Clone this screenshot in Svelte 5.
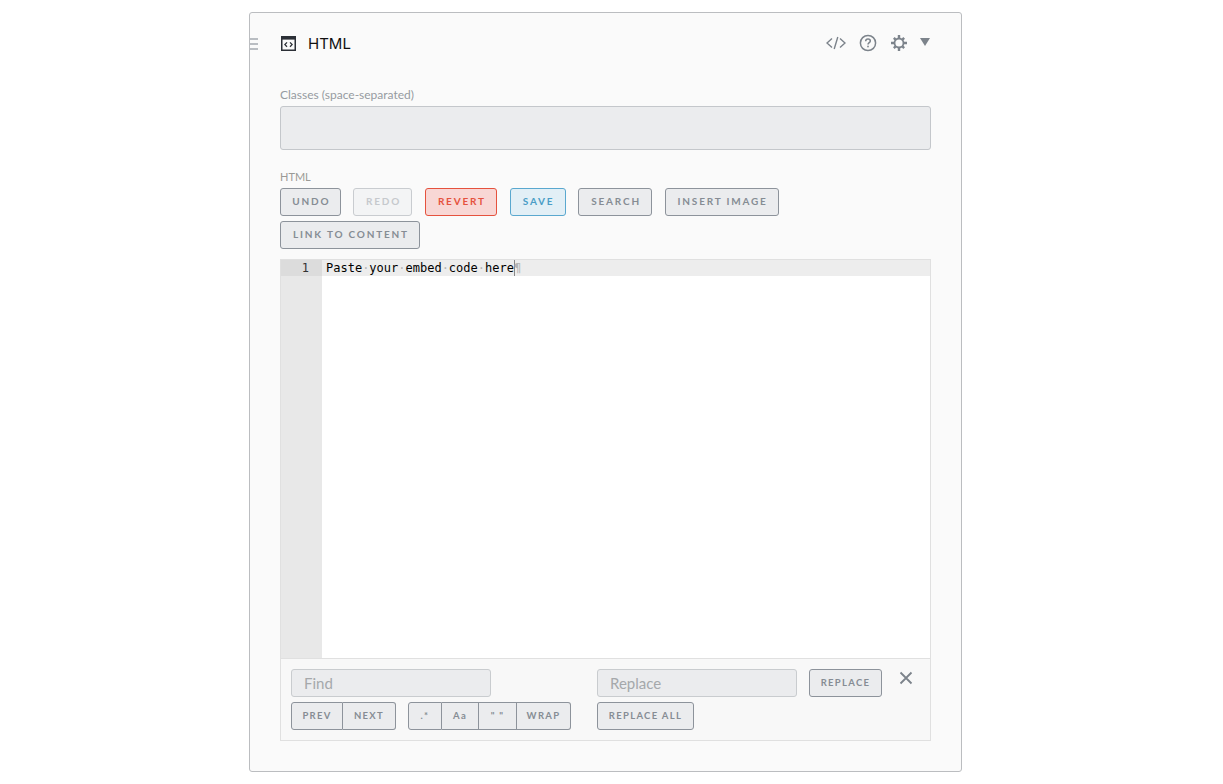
<script>
	const toolbar = [
		{ label: "UNDO", width: 60.6 },
		{ label: "REDO", width: 59, kind: "off" },
		{ label: "REVERT", width: 72.5, kind: "danger" },
		{ label: "SAVE", width: 56, kind: "info" },
		{ label: "SEARCH", width: 74 },
		{ label: "INSERT IMAGE", width: 114 },
		{ label: "LINK TO CONTENT", width: 140 }
	];
	const words = ["Paste", "your", "embed", "code", "here"];
</script>

<main class="panel">
	<div class="handle"><i></i><i></i><i></i></div>

	<header class="head">
		<svg class="block-icon" width="15" height="15" viewBox="0 0 15 15">
			<rect x="0.75" y="0.75" width="13.5" height="13.5" fill="none" stroke="#2b2f36" stroke-width="1.5" />
			<rect x="1" y="1" width="13" height="2.6" fill="#2b2f36" />
			<path d="M6 6.4 3.9 8.6 6 10.8M9 6.4l2.1 2.2L9 10.8" fill="none" stroke="#2b2f36" stroke-width="1.3" />
		</svg>
		<h2>HTML</h2>
		<div class="actions">
			<svg width="20" height="14" viewBox="0 0 20 14" class="code">
				<path d="M6 2.5 1 7l5 4.500M14 2.500 19 7l-5 4.500M11.800 1 8.200 13" fill="none" stroke="#7c838b" stroke-width="1.400" />
			</svg>
			<svg width="18" height="18" viewBox="0 0 18 18" class="help">
				<circle cx="9" cy="9" r="7.600" fill="none" stroke="#7c838b" stroke-width="1.500" />
				<path d="M6.700 7.200c0-1.400 1-2.200 2.300-2.200s2.300.8 2.300 2c0 1.700-2.300 1.700-2.300 3.500" fill="none" stroke="#7c838b" stroke-width="1.500" />
				<rect x="8.200" y="11.700" width="1.600" height="1.600" fill="#7c838b" />
			</svg>
			<svg width="16" height="16" viewBox="0 0 16 16" class="gear">
				<circle cx="8" cy="8" r="4.500" fill="none" stroke="#7c838b" stroke-width="1.800" />
				<path d="M6.800 0h2.400v3H6.800zM6.800 13h2.400v3H6.800zM0 6.800h3v2.400H0zM13 6.800h3v2.400h-3zM2 3.700 3.700 2 5.400 3.700 3.700 5.400zM10.600 12.300l1.700-1.700 1.700 1.700-1.700 1.700zM12.300 2 14 3.700l-1.700 1.700-1.700-1.700zM3.700 10.600l1.700 1.700L3.700 14 2 12.300z" fill="#7c838b" />
			</svg>
			<span class="caret"></span>
		</div>
	</header>

	<label class="field-label" for="classes">Classes (space-separated)</label>
	<input id="classes" class="classes" type="text" />

	<div class="field-label html-label">HTML</div>
	<div class="toolbar">
		{#each toolbar as b}
			<button class="btn {b.kind || ''}" style="width: {b.width}px">{b.label}</button>
		{/each}
	</div>

	<section class="editor">
		<div class="code-area">
			<div class="gutter">
				<div class="line-no">1</div>
			</div>
			<div class="lines">
				<div class="line">
					{#each words as w, i}<span>{w}</span>{#if i < words.length - 1}<span class="dot">·</span>{/if}{/each}<span class="cursor"></span><span class="pilcrow">¶</span>
				</div>
			</div>
		</div>

		<div class="search">
			<div class="search-col find">
				<input class="search-input" type="text" placeholder="Find" />
				<div class="search-row">
					<div class="group">
						<button class="sbtn w-prev">PREV</button>
						<button class="sbtn w-next">NEXT</button>
					</div>
					<div class="group">
						<button class="sbtn w-re">.*</button>
						<button class="sbtn w-aa">Aa</button>
						<button class="sbtn w-q">" "</button>
						<button class="sbtn w-wrap">WRAP</button>
					</div>
				</div>
			</div>
			<div class="search-col">
				<div class="search-row replace-row">
					<input class="search-input" type="text" placeholder="Replace" />
					<button class="sbtn solo w-replace">REPLACE</button>
					<svg class="close" width="14" height="14" viewBox="0 0 14 14">
						<path d="M1.500 1.500 12.500 12.500M12.500 1.500 1.500 12.500" stroke="#7c838b" stroke-width="1.800" fill="none" />
					</svg>
				</div>
				<button class="sbtn solo w-all">REPLACE ALL</button>
			</div>
		</div>
	</section>
</main>

<style>
	:global(body) {
		background: #fff;
		font-family: Lato, "Open Sans", sans-serif;
	}

	.panel {
		position: relative;
		box-sizing: border-box;
		width: 713px;
		height: 760px;
		margin: 12px 0 0 249px;
		padding: 0 30px;
		background: #fafafa;
		border: 1px solid #bbbdc0;
		border-radius: 3px;
	}

	.handle {
		position: absolute;
		left: 0;
		top: 25px;
		width: 8px;
		display: flex;
		flex-direction: column;
		gap: 3px;
	}
	.handle i {
		display: block;
		height: 2px;
		background: #b9bdc2;
	}

	.head {
		display: flex;
		align-items: center;
		height: 60px;
	}
	.block-icon {
		margin-left: 1px;
	}
	h2 {
		margin: 0 0 0 12px;
		font: 400 15px/1 Inter, "Open Sans", sans-serif;
		color: #111;
	}
	.actions {
		margin-left: auto;
		display: flex;
		align-items: center;
		margin-right: 1px;
	}
	.actions svg { display: block; }
	.code { margin-right: 13px; }
	.help { margin-right: 14px; }
	.gear { margin-right: 13px; }
	.caret {
		display: block;
		width: 0;
		height: 0;
		margin-top: -2px;
		border-left: 5.5px solid transparent;
		border-right: 5.5px solid transparent;
		border-top: 8px solid #7c838b;
	}

	.field-label {
		display: block;
		margin-top: 14px;
		font: 400 12px/16px Lato, sans-serif;
		color: #969ba1;
	}
	.html-label {
		margin-top: 19px;
		font-size: 11px;
		color: #9a9a96;
	}

	.classes {
		display: block;
		box-sizing: border-box;
		width: 651px;
		height: 44px;
		margin-top: 3px;
		background: #ebecee;
		border: 1px solid #c4c7cb;
		border-radius: 3px;
	}

	.toolbar {
		display: flex;
		flex-wrap: wrap;
		gap: 5px 12.500px;
		max-width: 640px;
		margin-top: 3px;
	}
	.btn {
		box-sizing: border-box;
		height: 28px;
		padding: 0 0 2px 2px;
		background: #ebecee;
		border: 1px solid #8d939b;
		border-radius: 3px;
		font: 700 10px/1 Lato, sans-serif;
		letter-spacing: 1.800px;
		color: #868c94;
	}
	.btn.off {
		background: #f3f4f5;
		border-color: #c9ccd0;
		color: #c6c9cd;
	}
	.btn.danger {
		background: #f8d7d5;
		border-color: #e5523e;
		color: #e5523e;
	}
	.btn.info {
		background: #e2eff6;
		border-color: #5aa8cf;
		color: #4a9dc6;
	}

	.editor {
		box-sizing: border-box;
		width: 651px;
		height: 482px;
		margin-top: 10px;
		border: 1px solid #e0e0e0;
		display: flex;
		flex-direction: column;
	}
	.code-area {
		flex: 1;
		display: flex;
		background: #fff;
	}
	.gutter {
		width: 41px;
		background: #e8e8e8;
	}
	.line-no {
		box-sizing: border-box;
		height: 16px;
		padding-right: 13px;
		background: #dcdcdc;
		text-align: right;
		font: 12px/16px "DejaVu Sans Mono", monospace;
		color: #333;
	}
	.lines { flex: 1; }
	.line {
		height: 16px;
		padding-left: 4px;
		background: #ededed;
		font: 12px/16px "DejaVu Sans Mono", monospace;
		color: #000;
		white-space: pre;
		display: flex;
	}
	.dot { color: #b5b5b5; }
	.cursor {
		width: 1px;
		height: 16px;
		background: #888;
		margin-right: -1px;
	}
	.pilcrow { color: #b4b4b4; }

	.search {
		box-sizing: border-box;
		height: 82px;
		padding: 10px 0 0 10px;
		background: #f8f8f8;
		border-top: 1px solid #e0e0e0;
		display: flex;
		gap: 26px;
	}
	.search-col {
		display: flex;
		flex-direction: column;
		align-items: flex-start;
		gap: 5px;
	}
	.find { width: 280px; }
	.search-row {
		display: flex;
		gap: 12px;
		align-items: flex-start;
	}
	.search-input {
		box-sizing: border-box;
		width: 200px;
		height: 28px;
		padding: 0 12px;
		background: #ebecee;
		border: 1px solid #c9cccf;
		border-radius: 3px;
		font: 400 15px/26px Lato, sans-serif;
	}
	.search-input::placeholder { color: #a5a8ab; opacity: 1; }

	.group { display: flex; }
	.sbtn {
		box-sizing: border-box;
		height: 28px;
		padding: 0;
		background: #ebecee;
		border: 1px solid #8d939b;
		border-left-width: 0;
		font: 700 9.500px/1 Lato, sans-serif;
		letter-spacing: 1.300px;
		color: #868c94;
	}
	.group .sbtn:first-child {
		border-left-width: 1px;
		border-radius: 3px 0 0 3px;
	}
	.group .sbtn:last-child { border-radius: 0 3px 3px 0; }
	.sbtn.solo {
		border-left-width: 1px;
		border-radius: 3px;
	}
	.w-prev { width: 52px; }
	.w-next { width: 53px; }
	.w-re { width: 34px; }
	.w-aa { width: 37px; }
	.w-q { width: 38px; }
	.w-wrap { width: 54px; }
	.w-replace { width: 73px; }
	.w-all { width: 97px; }
	.close {
		margin: 2px 0 0 5px;
	}
</style>
